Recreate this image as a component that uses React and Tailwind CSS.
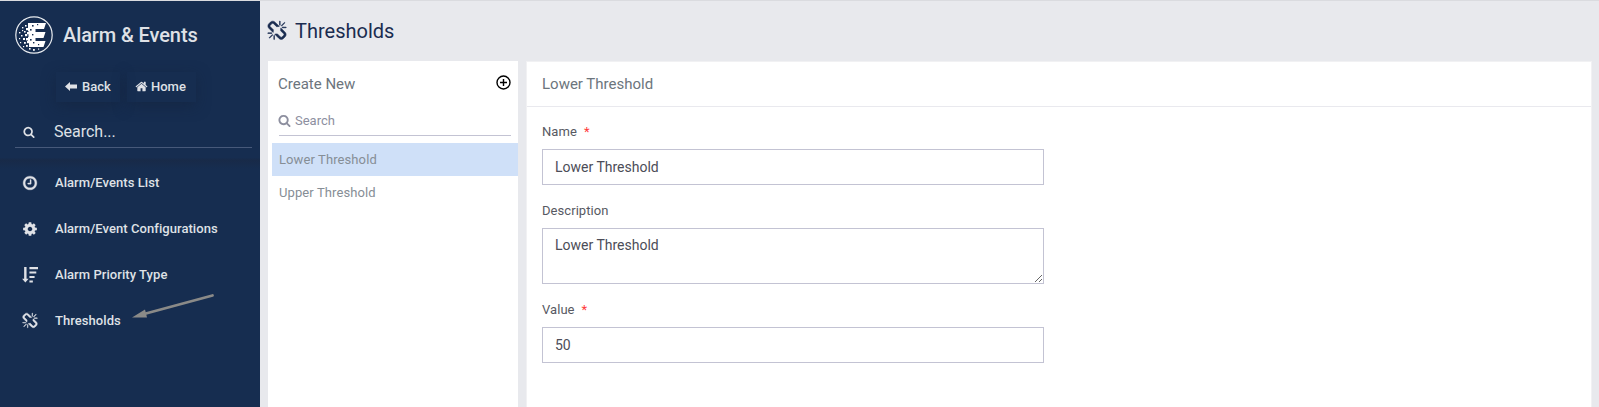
const PATHS = {
  search:
    "M1216 832q0-185-131.5-316.5t-316.5-131.5-316.5 131.5-131.5 316.5 131.5 316.5 316.5 131.5 316.5-131.5 131.5-316.5zm512 832q0 52-38 90t-90 38q-54 0-90-38l-343-342q-179 124-399 124-143 0-273.5-55.5t-225-150-150-225-55.5-273.5 55.5-273.5 150-225 225-150 273.5-55.5 273.5 55.5 225 150 150 225 55.5 273.5q0 220-124 399l343 343q37 37 37 90z",
  clock:
    "M1024 544v448q0 14-9 23t-23 9h-320q-14 0-23-9t-9-23v-64q0-14 9-23t23-9h224v-352q0-14 9-23t23-9h64q14 0 23 9t9 23zm416 352q0-148-73-273t-198-198-273-73-273 73-198 198-73 273 73 273 198 198 273 73 273-73 198-198 73-273zm224 0q0 209-103 385.5t-279.5 279.5-385.5 103-385.5-103-279.5-279.5-103-385.5 103-385.5 279.5-279.5 385.5-103 385.5 103 279.5 279.5 103 385.5z",
  cog:
    "M1152 896q0-106-75-181t-181-75-181 75-75 181 75 181 181 75 181-75 75-181zm512-109v222q0 12-8 23t-20 13l-185 28q-19 54-39 91 35 50 107 138 10 12 10 25t-9 23q-27 37-99 108t-94 71q-12 0-26-9l-138-108q-44 23-91 38-16 136-29 186-7 28-36 28h-222q-14 0-24.5-8.5t-11.5-21.5l-28-184q-49-16-90-37l-141 107q-10 9-25 9-14 0-25-11-126-114-165-168-7-10-7-23 0-12 8-23 15-21 51-66.5t54-70.5q-27-50-41-99l-183-27q-13-2-21-12.5t-8-23.5v-222q0-12 8-23t19-13l186-28q14-46 39-92-40-57-107-138-10-12-10-24 0-10 9-23 26-36 98.5-107.5t94.5-71.5q13 0 26 10l138 107q44-23 91-38 16-136 29-186 7-28 36-28h222q14 0 24.5 8.5t11.5 21.5l28 184q49 16 90 37l142-107q9-9 24-9 13 0 25 10 129 119 165 170 7 8 7 22 0 12-8 23-15 21-51 66.5t-54 70.5q26 50 41 98l183 28q13 2 21 12.5t8 23.5z",
  home:
    "M1472 992v480q0 26-19 45t-45 19h-384v-384h-256v384h-384q-26 0-45-19t-19-45v-480q0-1 .5-3t.5-3l575-474 575 474q1 2 1 6zm223-69l-62 74q-8 9-21 11h-3q-13 0-21-7l-692-577-692 577q-12 8-24 7-13-2-21-11l-62-74q-8-10-7-23.5t11-21.5l719-599q32-26 76-26t76 26l244 204v-195q0-14 9-23t23-9h192q14 0 23 9t9 23v408l219 182q10 8 11 21.5t-7 23.5z",
  priority:
    "M240 0h270v1320h230l-365 420l-365-420h230zM832 0h960v240h-960zM832 500h768v240h-768zM832 1000h576v240h-576zM832 1500h384v240h-384z",
  broken:
    "M503 1271l-256 256q-10 9-23 9-12 0-23-9-9-10-9-23t9-23l256-256q10-9 23-9t23 9q9 10 9 23t-9 23zm169 41v320q0 14-9 23t-23 9-23-9-9-23v-320q0-14 9-23t23-9 23 9 9 23zm-224-224q0 14-9 23t-23 9h-320q-14 0-23-9t-9-23 9-23 23-9h320q14 0 23 9t9 23zm1264 128q0 120-85 203l-147 146q-83 83-203 83-121 0-204-85l-334-335q-21-21-42-56l239-18 273 274q27 27 68 27.5t68-26.5l147-146q28-28 28-67 0-40-28-68l-274-275 18-239q35 21 56 42l336 336q84 86 84 204zm-617-724l-239 18-273-274q-28-28-68-28-39 0-68 27l-147 146q-28 28-28 67 0 40 28 68l274 274-18 240q-35-21-56-42l-336-336q-84-86-84-204 0-120 85-203l147-146q83-83 203-83 121 0 204 85l334 335q21 21 42 56zm633 84q0 14-9 23t-23 9h-320q-14 0-23-9t-9-23 9-23 23-9h320q14 0 23 9t9 23zm-544-544v320q0 14-9 23t-23 9-23-9-9-23v-320q0-14 9-23t23-9 23 9 9 23zm407 151l-256 256q-11 9-23 9t-23-9q-9-10-9-23t9-23l256-256q10-9 23-9t23 9q9 10 9 23t-9 23z",
};

function Icon({ name, className }) {
  return (
    <svg
      viewBox="0 0 1792 1792"
      fill="currentColor"
      stroke="currentColor"
      strokeWidth={name === "broken" ? 50 : name === "clock" ? 40 : 0}
      className={`shrink-0 overflow-visible ${className}`}
    >
      <path d={PATHS[name]} />
    </svg>
  );
}

const SPECKS = [
  [4, 16, 1.4], [7, 11, 1.4], [9, 15, 1.6], [10, 9, 1.6], [6, 19, 1.5], [10, 18, 2.2],
  [4, 22, 1.2], [8, 22, 2], [11, 22, 2.4], [5, 26, 1.2], [9, 26, 1.8], [12, 25, 2.2],
  [8, 30, 1.2], [11, 29, 1.8], [11, 12, 2.2], [12, 16, 2.2], [14, 32, 1.6],
  [18, 33, 1.8], [23, 32.5, 1.2], [7, 14, 1.2],
];
const HOLES = [
  [17, 9, 1.6], [22, 8, 1.2], [15, 13, 1.6], [17, 18, 1.4], [15, 23, 1.6], [18, 26, 1.4],
  [23, 28, 1.2],
];

function Logo() {
  return (
    <svg viewBox="0 0 38 38" className="size-[38px] shrink-0">
      <circle cx="19" cy="19" r="18.2" fill="none" stroke="#e9ecf0" strokeWidth="1.2" />
      <path
        d="M13 7H31L29 13H20.500V16H30.500L28.500 22H20.500V25H30.500L28.500 31H14V27H13V21H13.500V15H13V11Z"
        fill="#fff"
      />
      {SPECKS.map(([x, y, s]) => (
        <rect key={`${x}-${y}`} x={x} y={y} width={s} height={s} fill="#fff" />
      ))}
      {HOLES.map(([x, y, s]) => (
        <rect key={`${x}-${y}`} x={x} y={y} width={s} height={s} fill="#162d50" />
      ))}
    </svg>
  );
}

const NAV = [
  { icon: "clock", label: "Alarm/Events List" },
  { icon: "cog", label: "Alarm/Event Configurations" },
  { icon: "priority", label: "Alarm Priority Type" },
  { icon: "broken", label: "Thresholds" },
];

function Sidebar() {
  return (
    <aside className="relative flex w-[260px] shrink-0 flex-col bg-[#162d50] text-[#dfe1e6]">
      <div className="flex h-[68px] items-center gap-[10px] pl-[15px]">
        <Logo />
        <h1 className="text-[20px] leading-6 font-medium tracking-[-0.1px]">Alarm &amp; Events</h1>
      </div>
      <div className="flex h-[33px] gap-[7px] pl-14 text-[13px] font-medium">
        <button className="mt-[3px] flex h-[30px] w-16 items-center gap-[5px] pb-px pl-[9px] shadow-[0_4px_14px_rgba(20,35,60,0.55)]">
          <svg viewBox="0 0 12 9" className="h-[9px] w-3" fill="currentColor">
            <path d="M0 4.500L5 0V2.500H12V6.500H5V9Z" />
          </svg>
          Back
        </button>
        <button className="mt-[3px] flex h-[30px] w-[69px] items-center gap-[3px] pb-px pl-2 shadow-[0_4px_14px_rgba(20,35,60,0.55)]">
          <Icon name="home" className="size-[13px]" />
          Home
        </button>
      </div>
      <div className="mt-[15px] mr-2 ml-[15px] flex h-[31px] items-center border-b border-[#47597a] pl-2">
        <Icon name="search" className="size-3" />
        <span className="ml-[19px] text-[16px]">Search...</span>
      </div>
      <div className="h-3 shrink-0 bg-linear-to-b from-transparent from-80% to-[#182a48]" />
      <nav className="flex flex-col bg-linear-to-b from-[#182a48] to-transparent to-[9px]">
        {NAV.map((item) => (
          <a key={item.label} className="flex h-[46px] items-center pl-[22px] text-[13px] font-medium tracking-[0.06px]">
            <Icon name={item.icon} className="size-4" />
            <span className="ml-[17px]">{item.label}</span>
          </a>
        ))}
      </nav>
      <svg className="absolute top-[289px] left-[130px] h-[32px] w-[88px]" viewBox="0 0 88 32">
        <path d="M82.500 5.500L14 24" stroke="#8a8a88" strokeWidth="2.800" strokeLinecap="round" />
        <path d="M2 27.500L15 19.500L17 27.500Z" fill="#8a8a88" />
      </svg>
    </aside>
  );
}

function ListPanel() {
  return (
    <section className="flex w-[250px] shrink-0 flex-col bg-white">
      <div className="flex h-[46px] items-center justify-between pr-[7px] pl-[10px] text-[15px] text-[#6c757d]">
        <span>Create New</span>
        <svg viewBox="0 0 15 15" className="mb-[3px] size-[15px]" fill="none" stroke="#000" strokeWidth="1.400">
          <circle cx="7.500" cy="7.500" r="6.500" />
          <path d="M7.500 4v7M4 7.500h7" />
        </svg>
      </div>
      <div className="mr-[7px] ml-[11px] flex h-[29px] items-center gap-[3px] border-b border-[#c3c3d3] pb-px text-[13px] text-[#8d8f9f]">
        <Icon name="search" className="-ml-px size-[13px]" />
        <span className="ml-px">Search</span>
      </div>
      <ul className="mt-[7px] ml-1 text-[13px] tracking-[0.1px] text-[#868e96]">
        <li className="flex h-[33px] items-center bg-[#cfe0f8] pl-[7px]">Lower Threshold</li>
        <li className="flex h-[33px] items-center pl-[7px]">Upper Threshold</li>
      </ul>
    </section>
  );
}

function Label({ children, required }) {
  return (
    <label className="flex h-5 items-center gap-[7px] text-[13px] tracking-[0.06px] text-[#575962]">
      {children}
      {required && <span className="text-[#ff3b3b]">*</span>}
    </label>
  );
}

const FIELD = "block w-[502px] border border-[#c3c3d3] bg-white px-3 text-[14px] text-[#4c4d58] outline-none";

function DetailPanel() {
  return (
    <section className="ml-2 flex min-w-0 grow flex-col border border-b-0 border-[#f1f1f3] bg-white">
      <h3 className="flex h-[45px] items-center border-b border-[#e9e9ee] pl-[15px] text-[15px] text-[#6c757d]">
        Lower Threshold
      </h3>
      <div className="flex flex-col pt-[15px] pl-[15px]">
        <Label required>Name</Label>
        <input className={`${FIELD} mt-[7px] h-9`} defaultValue="Lower Threshold" />
        <div className="h-4" />
        <Label>Description</Label>
        <textarea className={`${FIELD} mt-[7px] h-14 resize py-[6px] leading-[21px]`} defaultValue="Lower Threshold" />
        <div className="h-4" />
        <Label required>Value</Label>
        <input className={`${FIELD} mt-[7px] h-9`} defaultValue="50" />
      </div>
    </section>
  );
}

export default function App() {
  return (
    <div className="flex h-[407px] w-full flex-col overflow-hidden border-t border-[#dadbdf] bg-[#e8e9ed] font-[Roboto,sans-serif]">
      <div className="flex min-h-0 grow">
        <Sidebar />
        <main className="flex min-w-0 grow flex-col pr-[7px] pl-2">
          <h2 className="flex h-[60px] shrink-0 items-center gap-2 text-[20px] text-[#1a2c50]">
            <Icon name="broken" className="-ml-px size-5" />
            Thresholds
          </h2>
          <div className="flex grow">
            <ListPanel />
            <DetailPanel />
          </div>
        </main>
      </div>
    </div>
  );
}
